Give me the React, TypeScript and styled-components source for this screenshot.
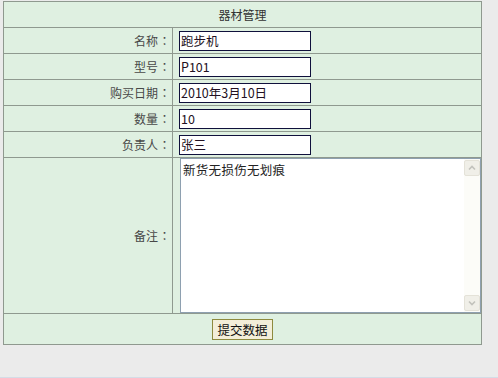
import React from "react";
import styled, { createGlobalStyle } from "styled-components";

const Global = createGlobalStyle`
  html, body { margin: 0; padding: 0; background: #ebebeb; }
  body { font-family: "Noto Sans CJK SC", "Noto Sans", sans-serif; }
`;

const Page = styled.div`
  box-sizing: border-box;
  height: 378px;
  padding: 1px 0 0 3px;
  border-bottom: 1px solid #d4dce6;
`;

const Form = styled.form`
  box-sizing: border-box;
  width: 479px;
  margin: 0;
  border: 1px solid #8f998f;
  background: #dff0e1;
`;

const Header = styled.div`
  height: 25px;
  border-bottom: 1px solid #8f998f;
  display: flex;
  align-items: center;
  justify-content: center;
  font-size: 12px;
  color: #333;
`;

const Row = styled.div<{ $h: number }>`
  display: grid;
  grid-template-columns: 168px 1px 1fr;
  height: ${(p) => p.$h}px;
  border-bottom: 1px solid #8f998f;
`;

const Divider = styled.div`
  background: #8f998f;
`;

const Label = styled.div`
  display: flex;
  align-items: center;
  justify-content: flex-end;
  padding-right: 1px;
  font-size: 12px;
  color: #484848;
`;

const Colon = styled.span`
  display: inline-block;
  width: 13px;
  text-align: center;
  font-family: "Noto Sans CJK TC", "Noto Sans CJK SC", sans-serif;
`;

const Value = styled.div`
  display: flex;
  align-items: center;
  padding-left: 6px;
  min-width: 0;
`;

const Input = styled.input`
  box-sizing: border-box;
  width: 132px;
  height: 20px;
  border: 1px solid #10103c;
  background: #fff;
  padding: 0 1px;
  font-family: "Noto Sans CJK SC", "Noto Sans", sans-serif;
  font-size: 12.5px;
  color: #221022;
  outline: none;
`;

const MemoBox = styled.div`
  box-sizing: border-box;
  width: 301px;
  height: 155px;
  margin-left: 1px;
  border: 1px solid #8ea0b0;
  background: #fff;
  display: flex;
`;

const Memo = styled.textarea`
  flex: 1;
  border: none;
  resize: none;
  outline: none;
  padding: 1px 2px;
  font-family: "Noto Sans CJK SC", "Noto Sans", sans-serif;
  font-size: 12.5px;
  color: #222;
  overflow: hidden;
  letter-spacing: 0.3px;
`;

const Scroll = styled.div`
  width: 16px;
  display: flex;
  flex-direction: column;
  justify-content: space-between;
  background: #fcfcf8;
  padding: 1px 0;
`;

const ScrollBtn = styled.div`
  box-sizing: border-box;
  width: 16px;
  height: 16px;
  background: #f0efe8;
  border: 1px solid #e4e2d8;
  border-radius: 2px;
  display: flex;
  align-items: center;
  justify-content: center;
`;

const SubmitRow = styled.div`
  height: 30px;
  display: flex;
  align-items: center;
  justify-content: flex-start;
  padding-left: 208px;
`;

const Button = styled.button`
  box-sizing: border-box;
  width: 61px;
  height: 21px;
  padding: 0;
  margin-top: 1px;
  border: 1px solid #8e8a3e;
  background: #f3eed9;
  font-family: "Noto Sans CJK SC", "Noto Sans", sans-serif;
  font-size: 12.5px;
  color: #111;
`;

const Chevron = ({ up }: { up: boolean }) => (
  <svg width="8" height="6" viewBox="0 0 8 6">
    <path
      d={up ? "M1 4.5 L4 1.5 L7 4.5" : "M1 1.5 L4 4.5 L7 1.5"}
      fill="none"
      stroke="#c2c2bc"
      strokeWidth="1.6"
    />
  </svg>
);

const fields: [string, string][] = [
  ["名称", "跑步机"],
  ["型号", "P101"],
  ["购买日期", "2010年3月10日"],
  ["数量", "10"],
  ["负责人", "张三"],
];

export default function App() {
  return (
    <Page>
      <Global />
      <Form onSubmit={(e) => e.preventDefault()}>
        <Header>器材管理</Header>
        {fields.map(([l, v]) => (
          <Row $h={25} key={l}>
            <Label>
              {l}
              <Colon>：</Colon>
            </Label>
            <Divider />
            <Value>
              <Input defaultValue={v} />
            </Value>
          </Row>
        ))}
        <Row $h={155}>
          <Label>
            备注<Colon>：</Colon>
          </Label>
          <Divider />
          <Value>
            <MemoBox>
              <Memo defaultValue="新货无损伤无划痕" />
              <Scroll>
                <ScrollBtn>
                  <Chevron up />
                </ScrollBtn>
                <ScrollBtn>
                  <Chevron up={false} />
                </ScrollBtn>
              </Scroll>
            </MemoBox>
          </Value>
        </Row>
        <SubmitRow>
          <Button type="submit">提交数据</Button>
        </SubmitRow>
      </Form>
    </Page>
  );
}
